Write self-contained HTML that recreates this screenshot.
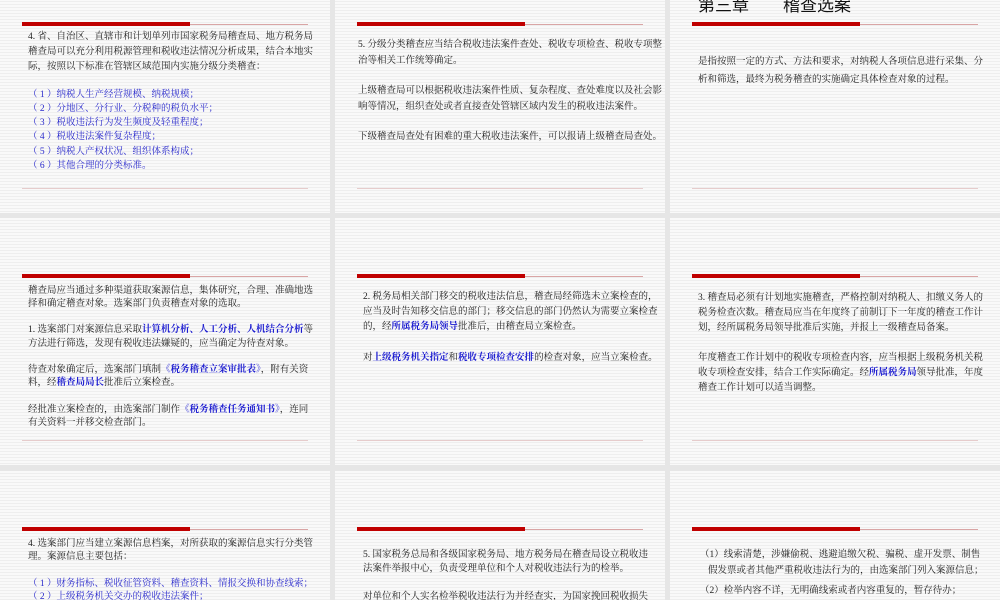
<!DOCTYPE html>
<html style="width:1000px;height:600px;overflow:hidden"><head><meta charset="utf-8">
<style>
*{margin:0;padding:0;box-sizing:border-box}
body{width:1000px;height:600px;overflow:hidden;background:#e6e6e6;position:relative;font-family:"Liberation Serif","Noto Serif CJK SC","Noto Sans CJK SC",serif;color:#222}
.s{position:absolute;width:330px;height:247px;overflow:hidden;background:repeating-linear-gradient(180deg,#f9f9f9 0,#f9f9f9 2px,#eeeeee 2px,#eeeeee 3px)}
.r3{height:129px}
.bar{position:absolute;left:22px;top:56px;width:168px;height:4px;background:#c00000}
.thin{position:absolute;left:190px;top:58px;width:118px;height:1px;background:#d9a5a5}
.bot{position:absolute;left:22px;top:222px;width:286px;height:1px;background:#e6cccc}
.l{position:absolute;font-size:9.5px;line-height:14px;white-space:nowrap}
.f{text-align:justify;text-align-last:justify}
.b{color:#2a2acc}
.k{color:#1a1ad0;font-weight:bold}
.t{position:absolute;left:28px;top:30px;font-size:17px;line-height:20px;font-family:"Liberation Sans","Noto Sans CJK SC",sans-serif;color:#111;white-space:nowrap}
</style></head><body>

<!-- Row 1 -->
<div class="s" style="left:0;top:-34px">
<div class="bar"></div><div class="thin"></div><div class="bot"></div>
<div class="l f" style="left:28px;top:64px;width:276px">4. 省、自治区、直辖市和计划单列市国家税务局稽查局、地方税务局</div>
<div class="l f" style="left:28px;top:79px;width:276px">稽查局可以充分利用税源管理和税收违法情况分析成果，结合本地实</div>
<div class="l" style="left:28px;top:94px">际，按照以下标准在管辖区域范围内实施分级分类稽查：</div>
<div class="l b" style="left:28px;top:122px">（ 1 ）纳税人生产经营规模、纳税规模；</div>
<div class="l b" style="left:28px;top:136px">（ 2 ）分地区、分行业、分税种的税负水平；</div>
<div class="l b" style="left:28px;top:150px">（ 3 ）税收违法行为发生频度及轻重程度；</div>
<div class="l b" style="left:28px;top:164px">（ 4 ）税收违法案件复杂程度；</div>
<div class="l b" style="left:28px;top:179px">（ 5 ）纳税人产权状况、组织体系构成；</div>
<div class="l b" style="left:28px;top:193px">（ 6 ）其他合理的分类标准。</div>
</div>

<div class="s" style="left:335px;top:-34px">
<div class="bar"></div><div class="thin"></div><div class="bot"></div>
<div class="l f" style="left:23px;top:72px;width:294px">5. 分级分类稽查应当结合税收违法案件查处、税收专项检查、税收专项整</div>
<div class="l" style="left:23px;top:88px">治等相关工作统筹确定。</div>
<div class="l f" style="left:23px;top:118px;width:294px">上级稽查局可以根据税收违法案件性质、复杂程度、查处难度以及社会影</div>
<div class="l" style="left:23px;top:134px">响等情况，组织查处或者直接查处管辖区域内发生的税收违法案件。</div>
<div class="l" style="left:23px;top:164px">下级稽查局查处有困难的重大税收违法案件，可以报请上级稽查局查处。</div>
</div>

<div class="s" style="left:670px;top:-34px">
<div class="t">第三章　　稽查选案</div>
<div class="bar"></div><div class="thin"></div><div class="bot"></div>
<div class="l f" style="left:28px;top:89px;width:276px">是指按照一定的方式、方法和要求，对纳税人各项信息进行采集、分</div>
<div class="l" style="left:28px;top:107px">析和筛选，最终为税务稽查的实施确定具体检查对象的过程。</div>
</div>

<!-- Row 2 -->
<div class="s" style="left:0;top:218px">
<div class="bar"></div><div class="thin"></div><div class="bot"></div>
<div class="l f" style="left:28px;top:66px;width:275px">稽查局应当通过多种渠道获取案源信息，集体研究，合理、准确地选</div>
<div class="l" style="left:28px;top:79px">择和确定稽查对象。选案部门负责稽查对象的选取。</div>
<div class="l f" style="left:28px;top:105px;width:275px">1. 选案部门对案源信息采取<span class="k">计算机分析、人工分析、人机结合分析</span>等</div>
<div class="l" style="left:28px;top:119px">方法进行筛选，发现有税收违法嫌疑的，应当确定为待查对象。</div>
<div class="l f" style="left:28px;top:145px;width:275px">待查对象确定后，选案部门填制<span class="k">《税务稽查立案审批表》</span>，附有关资</div>
<div class="l" style="left:28px;top:158px">料，经<span class="k">稽查局局长</span>批准后立案检查。</div>
<div class="l f" style="left:28px;top:185px;width:275px">经批准立案检查的，由选案部门制作<span class="k">《税务稽查任务通知书》</span>，连同</div>
<div class="l" style="left:28px;top:198px">有关资料一并移交检查部门。</div>
</div>

<div class="s" style="left:335px;top:218px">
<div class="bar"></div><div class="thin"></div><div class="bot"></div>
<div class="l f" style="left:28px;top:72px;width:282px">2. 税务局相关部门移交的税收违法信息，稽查局经筛选未立案检查的，</div>
<div class="l f" style="left:28px;top:87px;width:284px">应当及时告知移交信息的部门；移交信息的部门仍然认为需要立案检查</div>
<div class="l" style="left:28px;top:102px">的，经<span class="k">所属税务局领导</span>批准后，由稽查局立案检查。</div>
<div class="l" style="left:28px;top:133px">对<span class="k">上级税务机关指定</span>和<span class="k">税收专项检查安排</span>的检查对象，应当立案检查。</div>
</div>

<div class="s" style="left:670px;top:218px">
<div class="bar"></div><div class="thin"></div><div class="bot"></div>
<div class="l f" style="left:28px;top:73px;width:275px">3. 稽查局必须有计划地实施稽查，严格控制对纳税人、扣缴义务人的</div>
<div class="l f" style="left:28px;top:88px;width:275px">税务检查次数。稽查局应当在年度终了前制订下一年度的稽查工作计</div>
<div class="l" style="left:28px;top:103px">划，经所属税务局领导批准后实施，并报上一级稽查局备案。</div>
<div class="l f" style="left:28px;top:133px;width:275px">年度稽查工作计划中的税收专项检查内容，应当根据上级税务机关税</div>
<div class="l f" style="left:28px;top:148px;width:275px">收专项检查安排，结合工作实际确定。经<span class="k">所属税务局</span>领导批准，年度</div>
<div class="l" style="left:28px;top:163px">稽查工作计划可以适当调整。</div>
</div>

<!-- Row 3 -->
<div class="s r3" style="left:0;top:471px">
<div class="bar"></div><div class="thin"></div>
<div class="l f" style="left:28px;top:66px;width:275px">4. 选案部门应当建立案源信息档案，对所获取的案源信息实行分类管</div>
<div class="l" style="left:28px;top:79px">理。案源信息主要包括：</div>
<div class="l b" style="left:28px;top:106px">（ 1 ）财务指标、税收征管资料、稽查资料、情报交换和协查线索；</div>
<div class="l b" style="left:28px;top:119px">（ 2 ）上级税务机关交办的税收违法案件；</div>
</div>

<div class="s r3" style="left:335px;top:471px">
<div class="bar"></div><div class="thin"></div>
<div class="l f" style="left:28px;top:77px;width:279px">5. 国家税务总局和各级国家税务局、地方税务局在稽查局设立税收违</div>
<div class="l" style="left:28px;top:91px">法案件举报中心，负责受理单位和个人对税收违法行为的检举。</div>
<div class="l f" style="left:28px;top:119px;width:279px">对单位和个人实名检举税收违法行为并经查实，为国家挽回税收损失</div>
</div>

<div class="s r3" style="left:670px;top:471px">
<div class="bar"></div><div class="thin"></div>
<div class="l f" style="left:30px;top:77px;width:275px">（1）线索清楚，涉嫌偷税、逃避追缴欠税、骗税、虚开发票、制售</div>
<div class="l" style="left:38px;top:93px">假发票或者其他严重税收违法行为的，由选案部门列入案源信息；</div>
<div class="l" style="left:30px;top:113px">（2）检举内容不详，无明确线索或者内容重复的，暂存待办；</div>
</div>

</body></html>
